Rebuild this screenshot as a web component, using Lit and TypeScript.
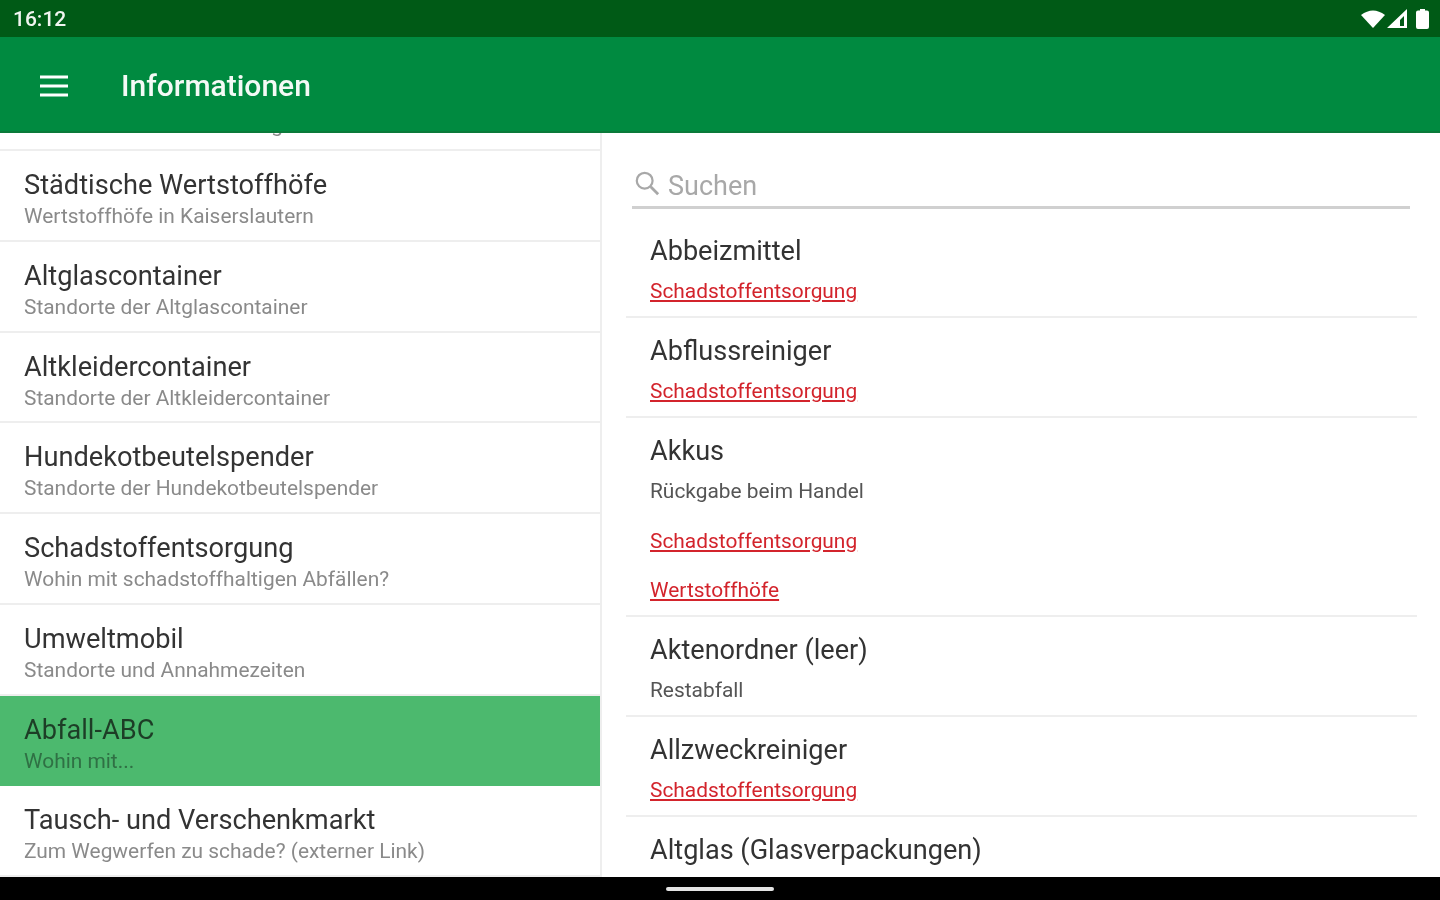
import { LitElement, html, css, svg } from "lit";
import { customElement } from "lit/decorators.js";

const nav = [
  ["Sperrmüll und Elektrogeräte", "Informationen zur Abholung"],
  ["Städtische Wertstoffhöfe", "Wertstoffhöfe in Kaiserslautern"],
  ["Altglascontainer", "Standorte der Altglascontainer"],
  ["Altkleidercontainer", "Standorte der Altkleidercontainer"],
  ["Hundekotbeutelspender", "Standorte der Hundekotbeutelspender"],
  ["Schadstoffentsorgung", "Wohin mit schadstoffhaltigen Abfällen?"],
  ["Umweltmobil", "Standorte und Annahmezeiten"],
  ["Abfall-ABC", "Wohin mit..."],
  ["Tausch- und Verschenkmarkt", "Zum Wegwerfen zu schade? (externer Link)"],
];

type Entry = { name: string; lines: [string, boolean][] };
const S = "Schadstoffentsorgung";
const entries: Entry[] = [
  { name: "Abbeizmittel", lines: [[S, true]] },
  { name: "Abflussreiniger", lines: [[S, true]] },
  { name: "Akkus", lines: [["Rückgabe beim Handel", false], [S, true], ["Wertstoffhöfe", true]] },
  { name: "Aktenordner (leer)", lines: [["Restabfall", false]] },
  { name: "Allzweckreiniger", lines: [[S, true]] },
  { name: "Altglas (Glasverpackungen)", lines: [["Altglascontainer", true]] },
];

@customElement("app-root")
export class AppRoot extends LitElement {
  static styles = css`
    :host { display: flex; flex-direction: column; width: 1440px; height: 900px; overflow: hidden; background: #fff; font-family: Roboto, "Noto Sans", sans-serif; filter: blur(0.55px); }
    .status { height: 37px; flex: none; background: #005a16; color: #f1f5f1; display: flex; align-items: center; justify-content: space-between; padding: 0 11px 0 13px; box-sizing: border-box; font-size: 21px; font-weight: 500; }
    .status-icons { display: flex; align-items: center; gap: 2px; }
    .status svg { display: block; }
    .bar { height: 96px; flex: none; background: #008a40; color: #f4faf6; display: flex; align-items: center; padding: 3px 0 0 40px; box-sizing: border-box; border-bottom: 2px solid #0b7a3a; }
    .bar svg { display: block; margin-right: 53px; }
    .bar h1 { margin: 0; font-size: 30px; font-weight: 500; line-height: 40px; }
    .body { flex: 1; min-height: 0; display: flex; }
    .left { width: 602px; flex: none; box-sizing: border-box; border-right: 2px solid #eeeeee; overflow: hidden; display: flex; flex-direction: column; justify-content: flex-end; }
    .row { flex: none; height: 90.75px; box-sizing: border-box; padding: 17px 24px 0; border-bottom: 2px solid #eeeeee; }
    .row.on { background: #4cb96e; border-bottom-color: #4cb96e; }
    .row .t { font-size: 27.2px; line-height: 34px; color: #333; white-space: nowrap; }
    .row .s { font-size: 20.9px; line-height: 28px; color: #8a8a8a; white-space: nowrap; }
    .row.on .t { color: #1d3d26; }
    .row.on .s { color: #2f7044; }
    .right { flex: 1; min-width: 0; overflow: hidden; padding: 0 23px 0 24px; }
    .search { display: flex; align-items: center; height: 76px; margin: 0 7px 9px 6px; padding-top: 33px; box-sizing: border-box; border-bottom: 3px solid #d0d0d0; color: #a8a8a8; font-size: 27px; }
    .search svg { display: block; margin: 0 8px 6px 2px; }
    .entry { border-bottom: 2px solid #eeeeee; padding: 13px 24px 0; box-sizing: border-box; }
    .entry .n { font-size: 27.1px; line-height: 40px; color: #333; white-space: nowrap; }
    .entry .l { font-size: 20.9px; line-height: 29px; padding: 6px 0 14.5px; color: #555; white-space: nowrap; }
    .entry .l:last-child { padding-bottom: 10px; }
    .entry .l.link { color: #d3242c; text-decoration: underline; }
    .navbar { height: 23px; flex: none; background: #000; display: flex; justify-content: center; padding-top: 10px; box-sizing: border-box; }
    .pill { width: 108px; height: 4px; border-radius: 2px; background: #e4e4e4; }
  `;

  render() {
    return html`
      <div class="status">
        <span>16:12</span>
        <div class="status-icons">
          <svg width="24" height="20" viewBox="0 0 24 20">${svg`<path d="M0 6 Q12 -3 24 6 L12 19 Z" fill="#fff"/>`}</svg>
          <svg width="20" height="20" viewBox="0 0 20 20">${svg`<path d="M20 0 V19 H0 Z M17 7 L13 11 V17 H17 Z" fill="#fff" fill-rule="evenodd"/>`}</svg>
          <svg width="13" height="20" viewBox="0 0 13 20" style="margin-left:7px">${svg`<path d="M4 1.5 V0 H9 V1.5 H11 Q13 1.5 13 3.5 V18 Q13 20 11 20 H2 Q0 20 0 18 V3.5 Q0 1.5 2 1.5 Z" fill="#fff"/>`}</svg>
        </div>
      </div>
      <div class="bar">
        <svg width="28" height="22" viewBox="0 0 28 22">${svg`<path d="M0 2 H28 M0 11 H28 M0 20 H28" stroke="#fff" stroke-width="3"/>`}</svg>
        <h1>Informationen</h1>
      </div>
      <div class="body">
        <div class="left">
          ${nav.map(([t, s]) => html`<div class="row ${t === "Abfall-ABC" ? "on" : ""}"><div class="t">${t}</div><div class="s">${s}</div></div>`)}
        </div>
        <div class="right">
          <div class="search">
            <svg width="26" height="26" viewBox="0 0 28 28">${svg`<circle cx="11.5" cy="11.5" r="8.5" fill="none" stroke="#a8a8a8" stroke-width="2.4"/><path d="M18 18 L26 26" stroke="#a8a8a8" stroke-width="3"/>`}</svg>
            <span>Suchen</span>
          </div>
          ${entries.map((e) => html`<div class="entry"><div class="n">${e.name}</div>${e.lines.map(([x, link]) => html`<div class="l ${link ? "link" : ""}">${x}</div>`)}</div>`)}
        </div>
      </div>
      <div class="navbar"><div class="pill"></div></div>
    `;
  }
}
